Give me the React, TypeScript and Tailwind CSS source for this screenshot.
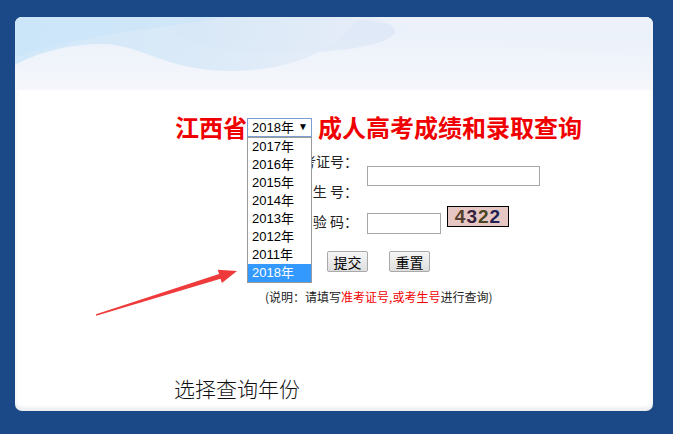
const years = ["2017年", "2016年", "2015年", "2014年", "2013年", "2012年", "2011年", "2018年"];

function Banner() {
  return (
    <svg className="block h-[73px] w-full" viewBox="0 0 638 73" preserveAspectRatio="none">
      <defs>
        <linearGradient id="bg" x1="0" y1="0" x2="0" y2="1">
          <stop offset="0" stopColor="#e9f0fa" />
          <stop offset="1" stopColor="#f5f7fb" />
        </linearGradient>
        <linearGradient id="wa" x1="0" y1="0" x2="1" y2="0">
          <stop offset="0" stopColor="#cbe6f9" />
          <stop offset="0.55" stopColor="#d8e8f7" />
          <stop offset="1" stopColor="#e5edf8" />
        </linearGradient>
      </defs>
      <rect width="638" height="73" fill="url(#bg)" />
      <ellipse cx="270" cy="14" rx="110" ry="22" fill="#dbe6f5" opacity="0.7" />
      <path d="M0 0 H345 C325 28 285 54 215 54 C150 54 125 26 85 27 C45 28 18 38 0 48 Z" fill="url(#wa)" opacity="0.85" />
      <path d="M0 0 H210 C170 8 120 12 70 22 C40 28 15 35 0 40 Z" fill="#c8e4f9" opacity="0.5" />
      <path d="M330 0 C400 10 470 30 638 40 V0 Z" fill="#ecf1fa" opacity="0.6" />
    </svg>
  );
}

function Captcha() {
  return (
    <div className="flex h-[21px] w-[62px] items-center justify-center border border-black bg-[#e6c7c4] font-['Liberation_Sans',sans-serif] text-[19px] font-bold leading-none tracking-[1px]">
      <span className="text-[#54402a]">4</span>
      <span className="text-[#35203c]">3</span>
      <span className="text-[#4a4622]">2</span>
      <span className="text-[#202152]">2</span>
    </div>
  );
}

export default function App() {
  return (
    <div className="relative h-[434px] w-[673px] overflow-hidden bg-[#1b4886] pt-[17px] font-['Noto_Sans_CJK_SC',sans-serif]">
      <div className="ml-[15px] h-[394px] w-[638px] overflow-hidden rounded-[7px] bg-white shadow-[inset_0_-3px_4px_rgba(60,80,120,0.12)]">
        <Banner />

        {/* title */}
        <div className="mt-[22px] flex items-center pl-[160px] text-[24px] font-bold leading-[30px] text-[#f00000]">
          <span>江西省</span>
          <div className="relative z-10">
            <div className="flex h-[19px] w-[65px] items-center justify-between border border-[#7a9fd0] bg-white pl-[4px] pr-[3px] font-['Liberation_Sans','Noto_Sans_CJK_SC',sans-serif] text-[13px] font-normal leading-none text-black">
              <span>2018年</span>
              <span className="text-[10px]">▼</span>
            </div>
            <ul className="absolute left-0 top-full w-[65px] border border-[#9a9a9a] bg-white font-['Liberation_Sans','Noto_Sans_CJK_SC',sans-serif] text-[13px] font-normal leading-[18px] text-black">
              {years.map((y, i) => (
                <li
                  key={y}
                  className={i === years.length - 1 ? "bg-[#3399ff] pl-[4px] text-white" : "pl-[4px]"}
                >
                  {y}
                </li>
              ))}
            </ul>
          </div>
          <span className="ml-[6px]">成人高考成绩和录取查询</span>
        </div>

        {/* form */}
        <div className="ml-[257px] mt-[4px] text-[14px] text-[#222]">
          <div className="flex">
            <div className="w-[86px] text-right leading-[30px]">
              <div>准考证号：</div>
              <div>考 生 号：</div>
            </div>
            <div className="ml-[9px] flex items-center">
              <input className="h-[20px] w-[173px] border border-[#a6a6a6] bg-white outline-none" />
            </div>
          </div>
          <div className="flex h-[30px]">
            <div className="w-[86px] text-right leading-[30px]">校 验 码：</div>
            <input className="ml-[9px] mt-[7px] h-[21px] w-[74px] border border-[#a6a6a6] bg-white outline-none" />
            <div className="ml-[6px]">
              <Captcha />
            </div>
          </div>
          <div className="ml-[55px] mt-[15px] flex gap-[21px]">
            <button className="h-[21px] w-[41px] rounded-[2px] border border-[#a9a9a9] bg-gradient-to-b from-[#f6f6f6] to-[#dedede] text-[14px] leading-none text-black">
              提交
            </button>
            <button className="h-[21px] w-[41px] rounded-[2px] border border-[#a9a9a9] bg-gradient-to-b from-[#f6f6f6] to-[#dedede] text-[14px] leading-none text-black">
              重置
            </button>
          </div>
        </div>

        <p className="ml-[250px] mt-[16px] text-[12px] leading-[18px] text-[#222]">
          (说明：请填写<span className="text-[#f00000]">准考证号,或考生号</span>进行查询)
        </p>

        <p className="ml-[159px] mt-[69px] text-[21px] font-light leading-[26px] text-[#111]">选择查询年份</p>
      </div>

      {/* annotation arrow */}
      <svg className="pointer-events-none absolute left-0 top-0" width="673" height="434">
        <polygon
          points="96,314.3 219.1,274 217.7,269.7 237,271 221.9,283.1 220.5,278.8 96.2,315.7"
          fill="#ee3a3a"
        />
      </svg>
    </div>
  );
}
